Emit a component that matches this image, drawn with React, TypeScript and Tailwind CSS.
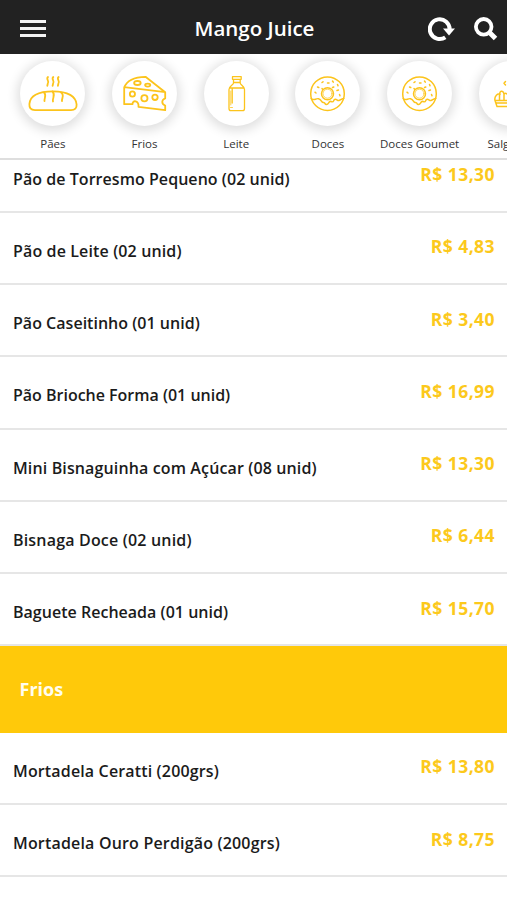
import type { ReactNode } from "react";

function Bread() {
  return (
    <>
      <path d="M15 49.2C10.500 49.200 9.200 46.500 9.400 43C10 35 18 30.300 33 30.300C48 30.300 56 35.500 56.600 43.500C56.800 47 55 49.200 51 49.200Z" />
      <path d="M28 16C25.500 18 29.800 20 27.800 22.500L27.300 24.800M33.300 16C30.800 18 35.100 20 33.100 22.500L32.600 24.800M38.600 16C36.100 18 40.400 20 38.400 22.500L37.900 24.800" />
      <path d="M24 31.500C27 34 24 37 24.500 40.200M32.500 30.500C36 34 32 37 33 40.500M41 31.500C45 34 41.500 37 42 40.200" />
    </>
  );
}

function Cheese() {
  return (
    <>
      <path d="M12.200 26.500C15 19 22 16 33.500 15.800L53.200 31.200V37.500C49.600 38.500 49 43 53.200 44.500V49.200L26.500 45.800C27 39.500 20.500 38.500 20.500 43.200H12.200ZM12.200 26.200L53.200 31.200" />
      <ellipse cx="25.400" cy="22" rx="3.300" ry="2" />
      <ellipse cx="35.700" cy="24.100" rx="2.600" ry="1.500" />
      <circle cx="20.400" cy="33" r="2.600" />
      <circle cx="32.400" cy="37.200" r="3.100" />
      <circle cx="43" cy="36.300" r="2.700" />
    </>
  );
}

function Bottle() {
  return (
    <g strokeWidth="1.300">
      <path d="M28.500 15.700H37.200V18.300H28.500ZM29.500 18.300V22C29.500 24 25 25 25 28.500V47.500Q25 49.700 27 49.700H38.500Q40.500 49.700 40.500 47.500V28.500C40.500 25 36.200 24 36.200 22V18.300M29.500 21.500H36.200M25.500 27H40M28.200 27.500V42" />
      <path d="M26.800 30V44M26.500 46.500H28.500" strokeWidth="0.800" />
    </g>
  );
}

function Donut() {
  return (
    <g strokeWidth="1.500">
      <circle cx="32.500" cy="32.700" r="16.800" />
      <circle cx="32.500" cy="32.700" r="6" />
      <circle cx="32.500" cy="32.700" r="4.500" strokeWidth="0.700" />
      <path d="M16.200 37.500C19 40.500 20.500 37 23.500 37.700C27 38.500 26 41.500 28.500 41.500S29 43.500 31.500 43.500S33.500 39.500 36 40.500S38 41 39 39C41 36.500 42 40 44 39.500S47 37.500 48.800 37.500" />
      <path d="M20 31.200L21 32M22.500 26L23.800 26.500M27 27.500L27.800 28.500M27 21.500L28 20.800M32.500 22H34M37.500 20L38.300 21.200M37.500 26.500L38.800 26M42.500 23.500L43 24.800M42 29.500L43.500 29M44.500 33.500L45 34.800" />
    </g>
  );
}

function Snacks() {
  return (
    <g strokeWidth="1.500">
      <path d="M26.500 20.500L25 22.300L26.500 24" />
      <path d="M16 39.500H50L47 45.500H18ZM16 39.500C15 35 19 32 21 33.500C20 30 24 28.500 25 33C28 31 30 34 29 39M20.500 34V39M25 33V39M17.500 42H42" />
      <path d="M30 39C29 30 37 27 40 39" />
    </g>
  );
}

const categories: { label: string; icon: ReactNode }[] = [
  { label: "Pães", icon: <Bread /> },
  { label: "Frios", icon: <Cheese /> },
  { label: "Leite", icon: <Bottle /> },
  { label: "Doces", icon: <Donut /> },
  { label: "Doces Goumet", icon: <Donut /> },
  { label: "Salgados", icon: <Snacks /> },
];

const breads = [
  ["Pão de Torresmo Pequeno (02 unid)", "R$ 13,30", "tracking-[0.050px]"],
  ["Pão de Leite (02 unid)", "R$ 4,83", "tracking-[0.130px]"],
  ["Pão Caseitinho (01 unid)", "R$ 3,40", "tracking-[0.020px]"],
  ["Pão Brioche Forma (01 unid)", "R$ 16,99", "tracking-[-0.010px]"],
  ["Mini Bisnaguinha com Açúcar (08 unid)", "R$ 13,30", "tracking-[0.130px]"],
  ["Bisnaga Doce (02 unid)", "R$ 6,44", "tracking-[0.180px]"],
  ["Baguete Recheada (01 unid)", "R$ 15,70", "tracking-[0.020px]"],
];

const coldCuts = [
  ["Mortadela Ceratti (200grs)", "R$ 13,80", "tracking-[0.150px]"],
  ["Mortadela Ouro Perdigão (200grs)", "R$ 8,75", "tracking-[0.180px]"],
];

function Row({ name, price, tracking }: { name: string; price: string; tracking: string }) {
  return (
    <li className="flex h-[72.250px] items-start justify-between border-b-2 border-[#e6e6e6] pr-[12px] pl-[13px]">
      <span className={`pt-[26px] text-[16px] leading-6 font-semibold whitespace-nowrap text-[#1b1b1b] ${tracking}`}>{name}</span>
      <span className="pt-[21.500px] text-[17.500px] leading-6 font-bold tracking-[0.450px] whitespace-nowrap text-[#fcc91c]">{price}</span>
    </li>
  );
}

export default function App() {
  return (
    <div className="flex h-[900px] w-[507px] flex-col overflow-hidden bg-white font-['Open_Sans','Noto_Sans',sans-serif]">
      <header className="flex h-[54px] shrink-0 items-center justify-between bg-[#222222] pt-[3px] pr-[9px] pl-5 text-white">
        <div className="flex w-[61px] flex-col gap-1">
          <span className="h-[3.300px] w-[25.500px] bg-[#f4f4f4]" />
          <span className="h-[3.300px] w-[25.500px] bg-[#f4f4f4]" />
          <span className="h-[3.300px] w-[25.500px] bg-[#f4f4f4]" />
        </div>
        <h1 className="text-[20.500px] font-semibold">Mango Juice</h1>
        <div className="flex w-[70px] items-center gap-[18px]">
          <svg className="h-[26px] w-[28px] shrink-0" viewBox="0 0 28 26" fill="none">
            <path d="M17.300 21.300A9.900 9.900 0 1 1 21.600 13.500" stroke="white" strokeWidth="4" />
            <path d="M15 12.500H27L21 19.500Z" fill="white" />
          </svg>
          <svg className="h-[26px] w-[24px] shrink-0" viewBox="0 0 24 26" fill="none" stroke="white">
            <circle cx="9.700" cy="10.800" r="7.800" strokeWidth="3.800" />
            <path d="M15.500 16.500L21.500 22.500" strokeWidth="5" />
          </svg>
        </div>
      </header>

      <nav className="flex h-[106px] shrink-0 overflow-hidden border-b-2 border-[#dedede] pt-[6.500px] pl-[7px]">
        {categories.map((category) => (
          <div key={category.label} className="flex w-[91.700px] shrink-0 flex-col items-center">
            <div className="size-[65px] rounded-full bg-white shadow-[0_2px_11px_3px_rgba(0,0,0,0.13)]">
              <svg className="size-[65px]" viewBox="0 0 65 65" fill="none" stroke="#fcc41c" strokeWidth="1.800" strokeLinejoin="round" strokeLinecap="round">
                {category.icon}
              </svg>
            </div>
            <span className="mt-[9px] text-[11.500px] leading-[18px] whitespace-nowrap text-[#333]">{category.label}</span>
          </div>
        ))}
      </nav>

      <main className="min-h-0 flex-1 overflow-hidden">
        <ul className="-mt-[19.500px]">
          {breads.map(([name, price, tracking]) => (
            <Row key={name} name={name} price={price} tracking={tracking} />
          ))}
        </ul>
        <h2 className="flex h-[86.500px] items-center bg-[#ffc90a] pl-[19.500px] text-[18px] font-bold text-[#fffdf0]">Frios</h2>
        <ul>
          {coldCuts.map(([name, price, tracking]) => (
            <Row key={name} name={name} price={price} tracking={tracking} />
          ))}
        </ul>
      </main>
    </div>
  );
}
